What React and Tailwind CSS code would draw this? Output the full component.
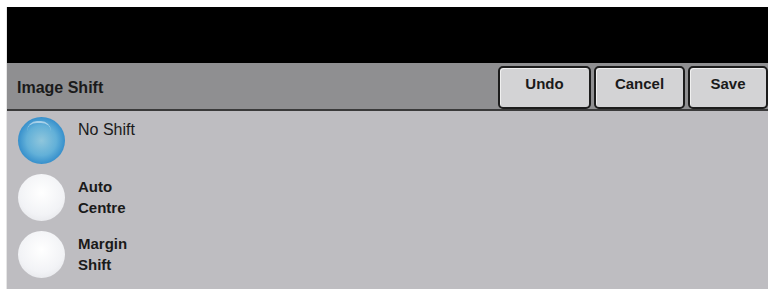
import { useState } from "react";

const options = [
  { id: "none", lines: ["No Shift"], bold: false },
  { id: "auto", lines: ["Auto", "Centre"], bold: true },
  { id: "margin", lines: ["Margin", "Shift"], bold: true },
];

function Radio({ on }) {
  return on ? (
    <div className="w-[47px] h-[47px] rounded-full bg-[radial-gradient(circle_at_50%_50%,#8fc6dc_0%,#62b0d8_45%,#2a86c8_78%,#1662a4_100%)] relative">
      <div className="absolute left-[9px] top-[4px] w-[24px] h-[10px] rounded-t-full border-t-2 border-white/50" />
    </div>
  ) : (
    <div className="w-[47px] h-[47px] rounded-full bg-[radial-gradient(circle_at_50%_40%,#ffffff_0%,#f2f3f6_60%,#dfe0e4_100%)]" />
  );
}

export default function App() {
  const [sel, setSel] = useState("none");

  return (
    <div className="w-[770px] h-[292px] bg-white pl-[6px] pt-[7px] font-['Liberation_Sans',Arial,sans-serif] text-[#1a1a1a]">
      <div className="w-[762px] h-[282px] flex flex-col border-l border-[#e6e6e6]">
        <div className="h-[56px] bg-black" />
        <div className="h-[48px] bg-[#8f8f91] border-b-2 border-[#3a3a3a] flex items-stretch">
          <div className="flex-1 flex items-center pl-[10px] pt-[4px] font-bold text-[16px]">
            Image Shift
          </div>
          <div className="flex gap-[3px] pt-[3px]">
            {[
              ["Undo", "w-[93px]"],
              ["Cancel", "w-[91px]"],
              ["Save", "w-[80px]"],
            ].map(([label, w]) => (
              <button
                key={label}
                className={`${w} h-[43px] bg-[#d3d3d5] border-2 border-[#1c1c1c] rounded-[5px] font-bold text-[15px] flex justify-center pt-[5px] shadow-[inset_1px_1px_0_#f0f0f0]`}
              >
                {label}
              </button>
            ))}
          </div>
        </div>
        <div className="flex-1 bg-[#bebdc1] pt-[6px] pl-[11px] flex flex-col gap-[10px]">
          {options.map((o) => (
            <div
              key={o.id}
              className="flex items-start gap-[13px] h-[47px] cursor-pointer"
              onClick={() => setSel(o.id)}
            >
              <Radio on={sel === o.id} />
              <div
                className={`pt-[2px] leading-[21px] ${
                  o.bold ? "font-bold text-[15px]" : "text-[16px]"
                }`}
              >
                {o.lines.map((l) => (
                  <div key={l}>{l}</div>
                ))}
              </div>
            </div>
          ))}
        </div>
      </div>
    </div>
  );
}
